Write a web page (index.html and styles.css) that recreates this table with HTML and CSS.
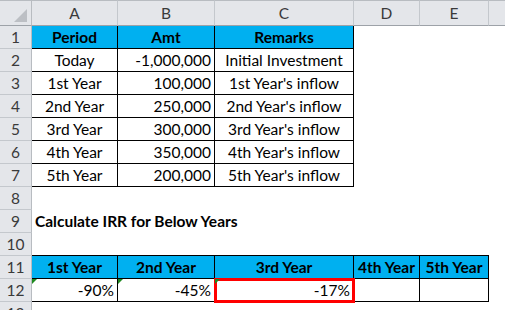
FILE: index.html
```html
<!DOCTYPE html>
<html>
<head>
<meta charset="utf-8">
<link rel="stylesheet" href="styles.css">
</head>
<body>
<div class="sheet">
  <div class="ch corner"><span class="tri"></span></div>
  <div class="ch">A</div><div class="ch">B</div><div class="ch">C</div><div class="ch">D</div><div class="ch">E</div><div class="ch last"></div>

  <div class="rh">1</div>
  <div class="c t hd">Period</div><div class="c t hd">Amt</div><div class="c t hd">Remarks</div><div class="c"></div><div class="c"></div><div class="c"></div>

  <div class="rh">2</div>
  <div class="c t ctr">Today</div><div class="c t rt">-1,000,000</div><div class="c t ctr">Initial Investment</div><div class="c"></div><div class="c"></div><div class="c"></div>

  <div class="rh">3</div>
  <div class="c t ctr">1st Year</div><div class="c t rt">100,000</div><div class="c t ctr">1st Year's inflow</div><div class="c"></div><div class="c"></div><div class="c"></div>

  <div class="rh">4</div>
  <div class="c t ctr">2nd Year</div><div class="c t rt">250,000</div><div class="c t ctr">2nd Year's inflow</div><div class="c"></div><div class="c"></div><div class="c"></div>

  <div class="rh">5</div>
  <div class="c t ctr">3rd Year</div><div class="c t rt">300,000</div><div class="c t ctr">3rd Year's inflow</div><div class="c"></div><div class="c"></div><div class="c"></div>

  <div class="rh">6</div>
  <div class="c t ctr">4th Year</div><div class="c t rt">350,000</div><div class="c t ctr">4th Year's inflow</div><div class="c"></div><div class="c"></div><div class="c"></div>

  <div class="rh">7</div>
  <div class="c t ctr">5th Year</div><div class="c t rt">200,000</div><div class="c t ctr">5th Year's inflow</div><div class="c"></div><div class="c"></div><div class="c"></div>

  <div class="rh">8</div>
  <div class="c"></div><div class="c"></div><div class="c"></div><div class="c"></div><div class="c"></div><div class="c"></div>

  <div class="rh">9</div>
  <div class="c title">Calculate IRR for Below Years</div><div class="c"></div><div class="c"></div><div class="c"></div><div class="c"></div><div class="c"></div>

  <div class="rh">10</div>
  <div class="c bb"></div><div class="c bb"></div><div class="c bb"></div><div class="c bb"></div><div class="c bb"></div><div class="c"></div>

  <div class="rh">11</div>
  <div class="c t hd">1st Year</div><div class="c t hd">2nd Year</div><div class="c t hd">3rd Year</div><div class="c t hd">4th Year</div><div class="c t hd">5th Year</div><div class="c"></div>

  <div class="rh">12</div>
  <div class="c t rt flag">-90%</div><div class="c t rt flag">-45%</div><div class="c t rt flag sel">-17%</div><div class="c t"></div><div class="c t"></div><div class="c"></div>

  <div class="rh">13</div>
  <div class="c"></div><div class="c"></div><div class="c"></div><div class="c"></div><div class="c"></div><div class="c"></div>
</div>
</body>
</html>
```

FILE: styles.css
```css
html, body {
  margin: 0;
  padding: 0;
  background: #ffffff;
}

body {
  width: 505px;
  height: 310px;
  overflow: hidden;
  font-family: Lato, "Open Sans", sans-serif;
  font-size: 15.5px;
  color: #000;
}

.sheet {
  display: grid;
  grid-template-columns: 32px 86px 97px 139px 66px 69px 1fr;
  grid-template-rows: 26px repeat(13, 23px);
}

.ch {
  box-sizing: border-box;
  background: #e4e6ea;
  border-top: 1px solid #b8bcc1;
  border-right: 1px solid #c4c8cd;
  border-bottom: 1px solid #9da2a8;
  color: #3a3a3a;
  text-align: center;
  line-height: 24px;
}

.ch.last {
  border-right: none;
}

.corner {
  position: relative;
  border-right: 1px solid #b8bcc1;
}

.corner .tri {
  position: absolute;
  right: 4px;
  bottom: 3px;
  width: 0;
  height: 0;
  border-left: 13px solid transparent;
  border-bottom: 13px solid #bcbfc4;
}

.rh {
  box-sizing: border-box;
  background: #e4e6ea;
  border-right: 1px solid #b8bcc1;
  border-bottom: 1px solid #c4c8cd;
  color: #3a3a3a;
  text-align: center;
  line-height: 22px;
}

.c {
  box-sizing: border-box;
  position: relative;
  line-height: 22px;
  padding: 0 3px;
  white-space: nowrap;
}

.t {
  border-right: 1px solid #000;
  border-bottom: 1px solid #000;
}

.bb {
  border-bottom: 1px solid #000;
}

.hd {
  background: #00b0f0;
  font-weight: 700;
  text-align: center;
  padding: 0;
}

.ctr {
  text-align: center;
  padding: 0;
}

.rt {
  text-align: right;
}

.title {
  font-weight: 700;
  overflow: visible;
}

.flag::before {
  content: "";
  position: absolute;
  left: 0;
  top: 0;
  width: 0;
  height: 0;
  border-top: 5px solid #1f8a1f;
  border-right: 5px solid transparent;
}

.sel {
  outline: 3px solid #ff0000;
  outline-offset: -2px;
  z-index: 1;
}
```
